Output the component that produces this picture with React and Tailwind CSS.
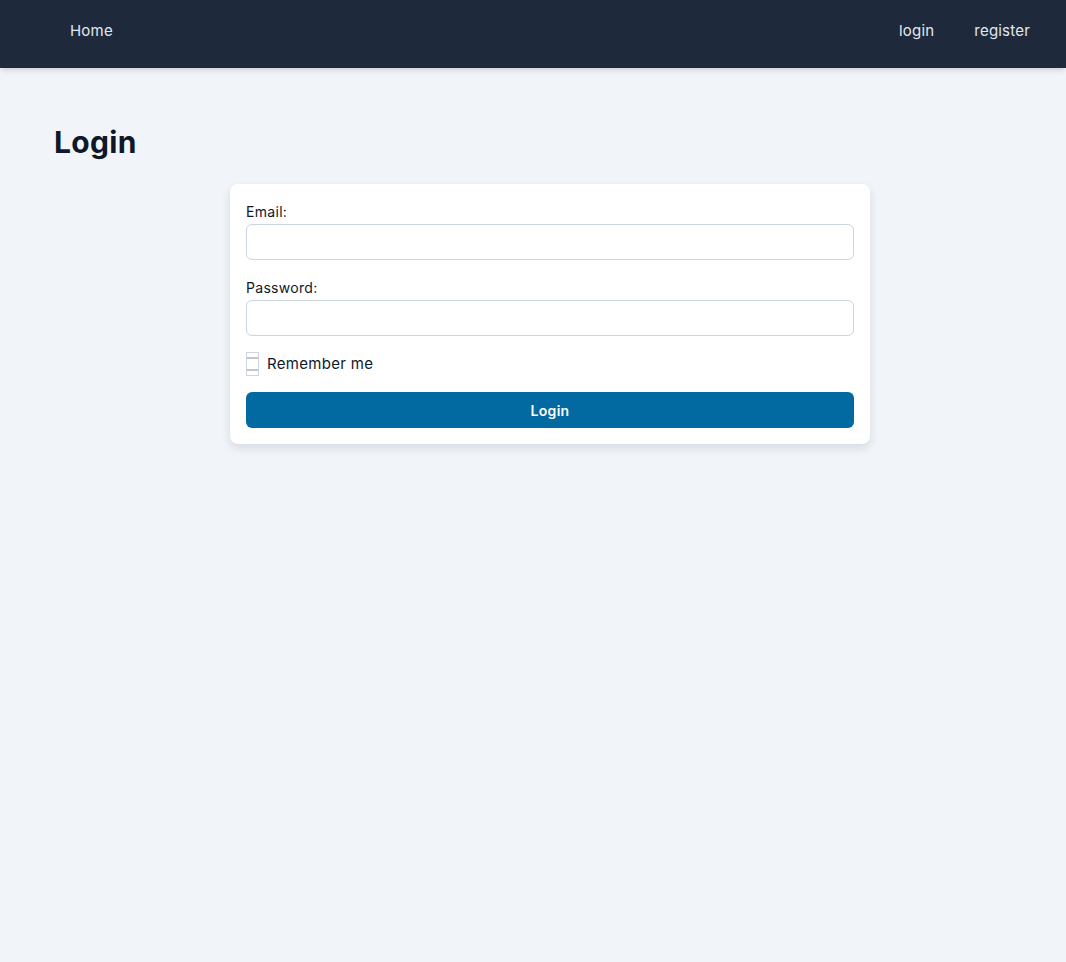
export default function App() {
  return (
    <div className="min-h-[962px] bg-[#f1f5f9] font-['Inter',sans-serif]">
      <nav className="flex h-[68px] items-center justify-between bg-[#1e293b] pb-[6px] pl-[70px] pr-[36px] shadow-md text-[15px] text-[#e2e8f0]">
        <a className="tracking-[0.2px]">Home</a>
        <div className="flex gap-[40px]">
          <a className="tracking-[0.2px]">login</a>
          <a className="tracking-[0.2px]">register</a>
        </div>
      </nav>
      <main className="pl-[54px] pr-[20px] pt-[56px]">
        <h1 className="text-[30px] leading-[36px] font-bold text-[#0f172a] tracking-[0.3px]">Login</h1>
        <div className="mx-auto mt-[24px] w-[640px] rounded-lg bg-white p-4 shadow-[0_4px_10px_rgba(15,23,42,0.12)]">
          <label className="block text-[14px] leading-[24px] text-[#0f172a] tracking-[0.3px]">Email:</label>
          <div className="h-[36px] rounded-md border border-[#cbd5e1] bg-white"></div>
          <label className="mt-[16px] block text-[14px] leading-[24px] text-[#0f172a] tracking-[0.3px]">Password:</label>
          <div className="h-[36px] rounded-md border border-[#cbd5e1] bg-white"></div>
          <div className="mt-[16px] flex h-[24px] items-center gap-[8px]">
            <div className="relative h-[24px] w-[13px] border border-[#cbd5e1]">
              <div className="absolute left-0 right-0 top-[4px] h-[14px] border-y-2 border-[#c4c4c4]"></div>
            </div>
            <span className="text-[15px] leading-[24px] text-[#0f172a] tracking-[0.3px]">Remember me</span>
          </div>
          <button className="mt-[16px] block h-[36px] w-full rounded-md bg-[#0369a1] text-[14px] font-semibold text-white tracking-[0.3px]">Login</button>
        </div>
      </main>
    </div>
  );
}
